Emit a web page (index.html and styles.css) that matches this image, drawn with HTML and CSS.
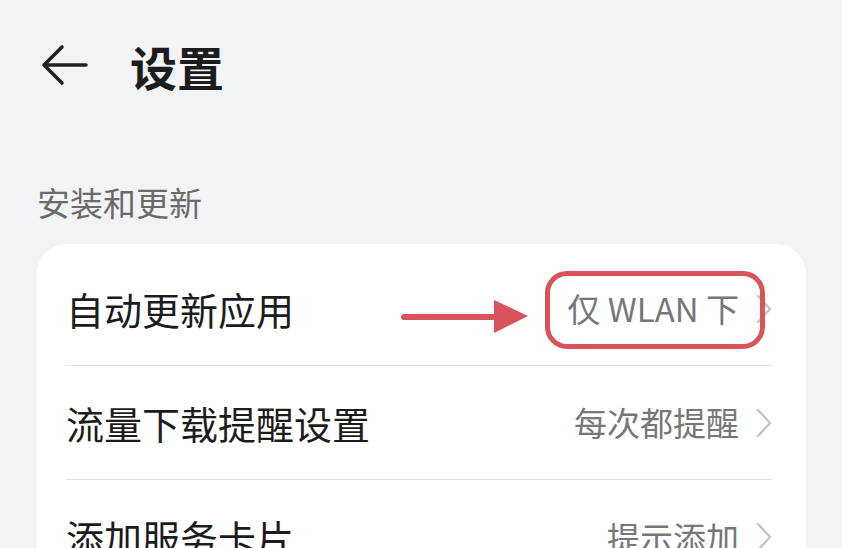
FILE: index.html
```html
<!DOCTYPE html>
<html lang="zh-CN">
<head>
<meta charset="utf-8">
<link rel="stylesheet" href="styles.css">
</head>
<body>
<div class="page">
  <header class="topbar">
    <svg class="back" width="48" height="44" viewBox="0 0 48 44">
      <path d="M46 22 H4 M22 4 L4 22 L22 40" fill="none" stroke="#222" stroke-width="3.6" stroke-linecap="round" stroke-linejoin="round"/>
    </svg>
    <h1 class="title">设置</h1>
  </header>
  <div class="section-label">安装和更新</div>
  <div class="card">
    <div class="row">
      <span class="label">自动更新应用</span>
      <span class="value highlighted">仅 WLAN 下</span>
      <svg class="chev" width="16" height="30" viewBox="0 0 16 30"><path d="M2 2 L14 15 L2 28" fill="none" stroke="#c4c4c4" stroke-width="2.4" stroke-linecap="round" stroke-linejoin="round"/></svg>
      <div class="annot-box"></div>
      <svg class="annot-arrow" width="132" height="40" viewBox="0 0 132 40"><path d="M4 20 H100" stroke="#d8545a" stroke-width="6" stroke-linecap="round"/><path d="M94 3 L128 19 L94 36 Z" fill="#d8545a"/></svg>
    </div>
    <div class="row">
      <span class="label">流量下载提醒设置</span>
      <span class="value">每次都提醒</span>
      <svg class="chev" width="16" height="30" viewBox="0 0 16 30"><path d="M2 2 L14 15 L2 28" fill="none" stroke="#c4c4c4" stroke-width="2.4" stroke-linecap="round" stroke-linejoin="round"/></svg>
    </div>
    <div class="row">
      <span class="label">添加服务卡片</span>
      <span class="value">提示添加</span>
      <svg class="chev" width="16" height="30" viewBox="0 0 16 30"><path d="M2 2 L14 15 L2 28" fill="none" stroke="#c4c4c4" stroke-width="2.4" stroke-linecap="round" stroke-linejoin="round"/></svg>
    </div>
  </div>
</div>
</body>
</html>
```
FILE: styles.css
```css
* { box-sizing: border-box; }
html, body { margin: 0; padding: 0; }
body {
  background: #f2f3f5;
  font-family: "Noto Sans CJK SC", "Noto Sans", sans-serif;
  width: 842px;
  height: 548px;
  overflow: hidden;
}
.page {
  padding: 0 36px 0 37px;
}
.topbar {
  display: flex;
  align-items: center;
  height: 134px;
  padding-left: 3px;
  padding-bottom: 4px;
}
.back { display: block; margin-right: 42px; }
.title {
  margin: 0;
  font-size: 47px;
  font-weight: 700;
  color: #1c1c1c;
  line-height: 1;
}
.section-label {
  font-size: 33px;
  color: #6a6a6a;
  line-height: 1;
  margin-top: 52px;
  height: 58px;
}
.card {
  background: #ffffff;
  border-radius: 30px;
  padding: 8px 34px 0 29px;
}
.row {
  position: relative;
  display: flex;
  align-items: center;
  height: 114px;
  border-bottom: 1.5px solid #e2e2e2;
}
.row:last-child { border-bottom: none; }
.label {
  font-size: 38px;
  color: #1c1c1c;
  flex: 1;
  line-height: 1;
}
.value {
  font-size: 33px;
  color: #777;
  line-height: 1;
  margin-right: 17px;
}
.chev { display: block; flex: none; }
.annot-box {
  position: absolute;
  left: 479px;
  top: 19px;
  width: 220px;
  height: 78px;
  border: 5px solid #d8545a;
  border-radius: 22px;
}
.annot-arrow {
  position: absolute;
  left: 334px;
  top: 45px;
}
```
